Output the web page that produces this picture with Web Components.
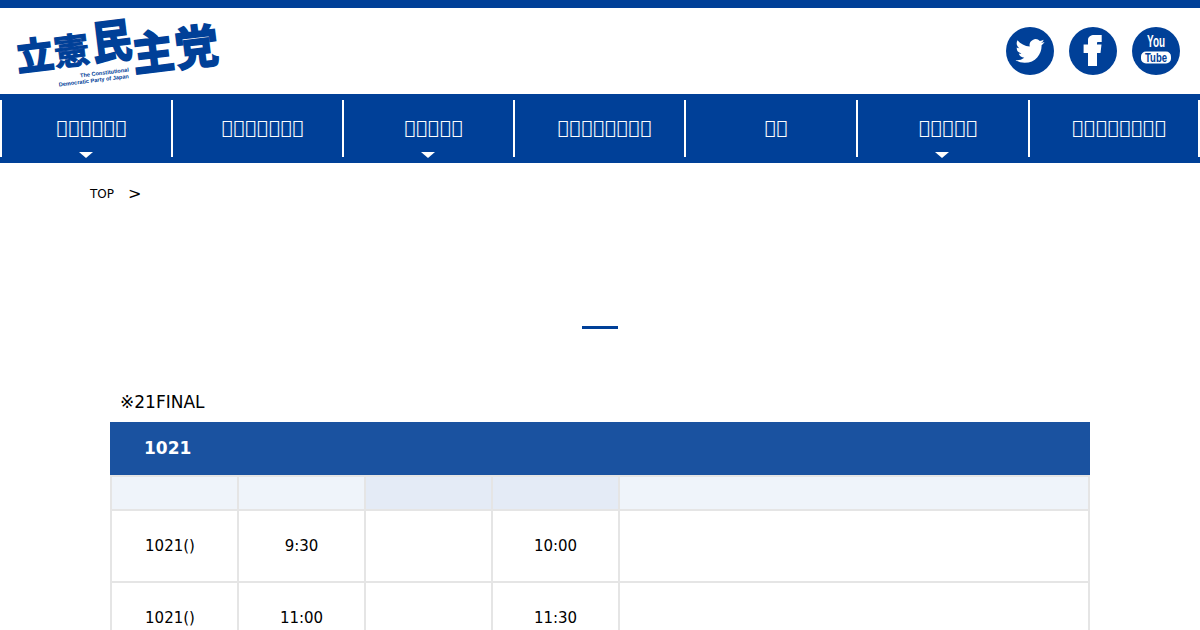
<!DOCTYPE html>
<html lang="ja">
  <head>
    <meta charset="UTF-8" />
    <title>立憲民主党</title>
    <style>
      html, body { margin: 0; background: #fff; overflow: hidden; }
      body { font-family: "DejaVu Sans", sans-serif; color: #000; }
    </style>
  </head>
  <body>
    <template id="site-header">
      <style>
        :host { display: flex; justify-content: space-between; align-items: flex-start; height: 86px; border-top: 8px solid #004098; }
        .logo { display: block; overflow: visible; }
        .logo text { fill: #004098; text-anchor: middle; }
        .jp { font-family: "Noto Sans CJK JP", sans-serif; font-weight: 700; stroke: #004098; stroke-width: 2px; }
        .logo .fino { stroke-width: 1px; }
        .logo .en { font-family: "Liberation Sans", sans-serif; font-weight: 700; font-size: 5.6px; text-anchor: end; }
        .sns { display: flex; gap: 15px; margin: 19px 20px 0 0; }
      </style>
      <svg class="logo" width="230" height="86" viewBox="0 8 230 86">
        <text class="jp" transform="translate(35 55) rotate(-7)" y=".38em" font-size="37">立</text>
        <text class="jp fino" transform="translate(71.500 50.500) rotate(-7)" y=".38em" font-size="36">憲</text>
        <text class="jp" transform="translate(111.500 40.500) rotate(-7) scale(.86 1)" y=".38em" font-size="46">民</text>
        <text class="jp" transform="translate(153 51.500) rotate(-7) scale(.9 1)" y=".38em" font-size="46">主</text>
        <text class="jp" transform="translate(196.500 46.500) rotate(-7) scale(.94 1)" y=".38em" font-size="46">党</text>
        <text class="en" transform="translate(129 71.500) rotate(-7)">The Constitutional</text>
        <text class="en" transform="translate(129 78) rotate(-7)">Democratic Party of Japan</text>
      </svg>
      <div class="sns">
        <sns-icon kind="twitter"></sns-icon>
        <sns-icon kind="facebook"></sns-icon>
        <sns-icon kind="youtube"></sns-icon>
      </div>
    </template>

    <template id="site-nav">
      <style>
        :host { display: flex; height: 57px; padding: 6px 0; background: #004098; }
      </style>
      <slot></slot>
    </template>

    <template id="nav-item">
      <style>
        :host { display: flex; flex: 0 0 171px; box-sizing: border-box; align-items: center; justify-content: center; border-left: 2px solid #fff; padding: 0 0 2px 11px; position: relative; color: #fff; font-size: 18px; letter-spacing: 1px; height: 57px; }
        :host(:nth-child(n+5)) { flex-basis: 172px; }
        :host(:last-child) { flex: 1 1 0; border-right: 2px solid #fff; }
        .arrow { display: none; position: absolute; left: 77px; bottom: -1px; width: 0; height: 0; border: 7px solid transparent; border-top: 6px solid #fff; border-bottom: 0; }
        :host([more]) .arrow { display: block; }
      </style>
      <slot></slot><span class="arrow"></span>
    </template>

    <template id="bread-crumb">
      <style>
        :host { display: flex; align-items: center; height: 60px; padding: 1px 0 0 90px; box-sizing: border-box; font-size: 12px; }
        .sep { font-size: 16px; margin-left: 14px; }
      </style>
      <slot></slot><span class="sep">&gt;</span>
    </template>

    <template id="page-title">
      <style>
        :host { display: flex; justify-content: center; height: 162px; }
        i { display: block; width: 36px; height: 3px; margin-top: 103px; background: #004098; }
      </style>
      <i></i>
    </template>

    <template id="schedule-table">
      <style>
        :host { display: block; margin: 0 110px; font-size: 15px; }
        .note { margin-left: 10px; height: 37px; line-height: 35px; font-size: 17px; }
        .head { height: 53px; line-height: 53px; padding-left: 34px; background: #1a52a0; color: #fff; font-size: 17px; font-weight: 700; }
        .grid { display: grid; grid-template-columns: 127px 127px 127px 127px 1fr; border-right: 2px solid #e5e5e5; }
      </style>
      <div class="note"><slot name="note"></slot></div>
      <div class="head"><slot name="head"></slot></div>
      <div class="grid"><slot></slot></div>
    </template>

    <template id="table-cell">
      <style>
        :host { display: flex; align-items: center; justify-content: center; box-sizing: border-box; height: 72px; border-left: 2px solid #e5e5e5; border-bottom: 2px solid #e5e5e5; }
        :host([th]) { height: 36px; border-top: 2px solid #e5e5e5; background: #eff4fa; }
        :host([th="dark"]) { background: #e4ebf6; }
        :host([fecha]) { padding-right: 9px; }
      </style>
      <slot></slot>
    </template>

    <script>
      const fuente = `font-family="'Liberation Sans Narrow','Liberation Sans',sans-serif" font-weight="700" text-anchor="middle"`;
      const icons = {
        twitter: `<path fill="#fff" transform="translate(9.5 9.5) scale(1.21)" d="M23.95 4.57a10 10 0 0 1-2.82.78 4.96 4.96 0 0 0 2.16-2.72c-.95.55-2 .96-3.13 1.19a4.92 4.92 0 0 0-8.38 4.48C7.69 8.1 4.07 6.13 1.64 3.16a4.82 4.82 0 0 0-.67 2.48c0 1.71.87 3.21 2.19 4.1a4.9 4.9 0 0 1-2.23-.62v.06a4.92 4.92 0 0 0 3.95 4.83 5 5 0 0 1-2.21.08 4.94 4.94 0 0 0 4.6 3.42A9.87 9.87 0 0 1 0 19.54a14 14 0 0 0 7.56 2.21c9.05 0 14-7.5 14-13.98 0-.21 0-.42-.02-.63a9.94 9.94 0 0 0 2.46-2.55z"/>`,
        facebook: `<path fill="#fff" d="M19 39V26h-4.400v-8.500H19V13c0-3.500 3-5 6-5h7.700v7H29c-1 0-1 .5-1 2v.5h4.500l-1 8.500H28v13z"/>`,
        youtube: `<text x="24" y="20" fill="#fff" ${fuente} font-size="16" textLength="18" lengthAdjust="spacingAndGlyphs">You</text>
          <rect x="9" y="24.500" width="30" height="12" rx="5" fill="#fff"/>
          <text x="24" y="35" fill="#004098" ${fuente} font-size="13.500" textLength="22" lengthAdjust="spacingAndGlyphs">Tube</text>`,
      };

      class SnsIcon extends HTMLElement {
        connectedCallback() {
          const shadow = this.attachShadow({ mode: "open" });
          shadow.innerHTML = `<style>:host{display:block;width:48px;height:48px}svg{display:block}</style>
            <svg width="48" height="48" viewBox="0 0 48 48"><circle cx="24" cy="24" r="24" fill="#004098"/>${icons[this.getAttribute("kind")]}</svg>`;
        }
      }
      customElements.define("sns-icon", SnsIcon);

      // 中身はテンプレートをそのまま写すだけの要素
      for (const nombre of ["site-header", "site-nav", "nav-item", "bread-crumb", "page-title", "schedule-table", "table-cell"]) {
        customElements.define(nombre, class extends HTMLElement {
          connectedCallback() {
            const shadow = this.attachShadow({ mode: "open" });
            shadow.append(document.getElementById(nombre).content.cloneNode(true));
          }
        });
      }
    </script>

    <site-header></site-header>
    <site-nav>
      <nav-item more>&#xE000;&#xE000;&#xE000;&#xE000;&#xE000;&#xE000;</nav-item>
      <nav-item>&#xE000;&#xE000;&#xE000;&#xE000;&#xE000;&#xE000;&#xE000;</nav-item>
      <nav-item more>&#xE000;&#xE000;&#xE000;&#xE000;&#xE000;</nav-item>
      <nav-item>&#xE000;&#xE000;&#xE000;&#xE000;&#xE000;&#xE000;&#xE000;&#xE000;</nav-item>
      <nav-item>&#xE000;&#xE000;</nav-item>
      <nav-item more>&#xE000;&#xE000;&#xE000;&#xE000;&#xE000;</nav-item>
      <nav-item>&#xE000;&#xE000;&#xE000;&#xE000;&#xE000;&#xE000;&#xE000;&#xE000;</nav-item>
    </site-nav>
    <bread-crumb>TOP</bread-crumb>
    <page-title></page-title>
    <schedule-table>
      <span slot="note">※21FINAL</span>
      <span slot="head">1021</span>
      <table-cell th></table-cell><table-cell th></table-cell><table-cell th="dark"></table-cell><table-cell th="dark"></table-cell><table-cell th></table-cell>
      <table-cell fecha>1021()</table-cell><table-cell>9:30</table-cell><table-cell></table-cell><table-cell>10:00</table-cell><table-cell></table-cell>
      <table-cell fecha>1021()</table-cell><table-cell>11:00</table-cell><table-cell></table-cell><table-cell>11:30</table-cell><table-cell></table-cell>
    </schedule-table>
  </body>
</html>
